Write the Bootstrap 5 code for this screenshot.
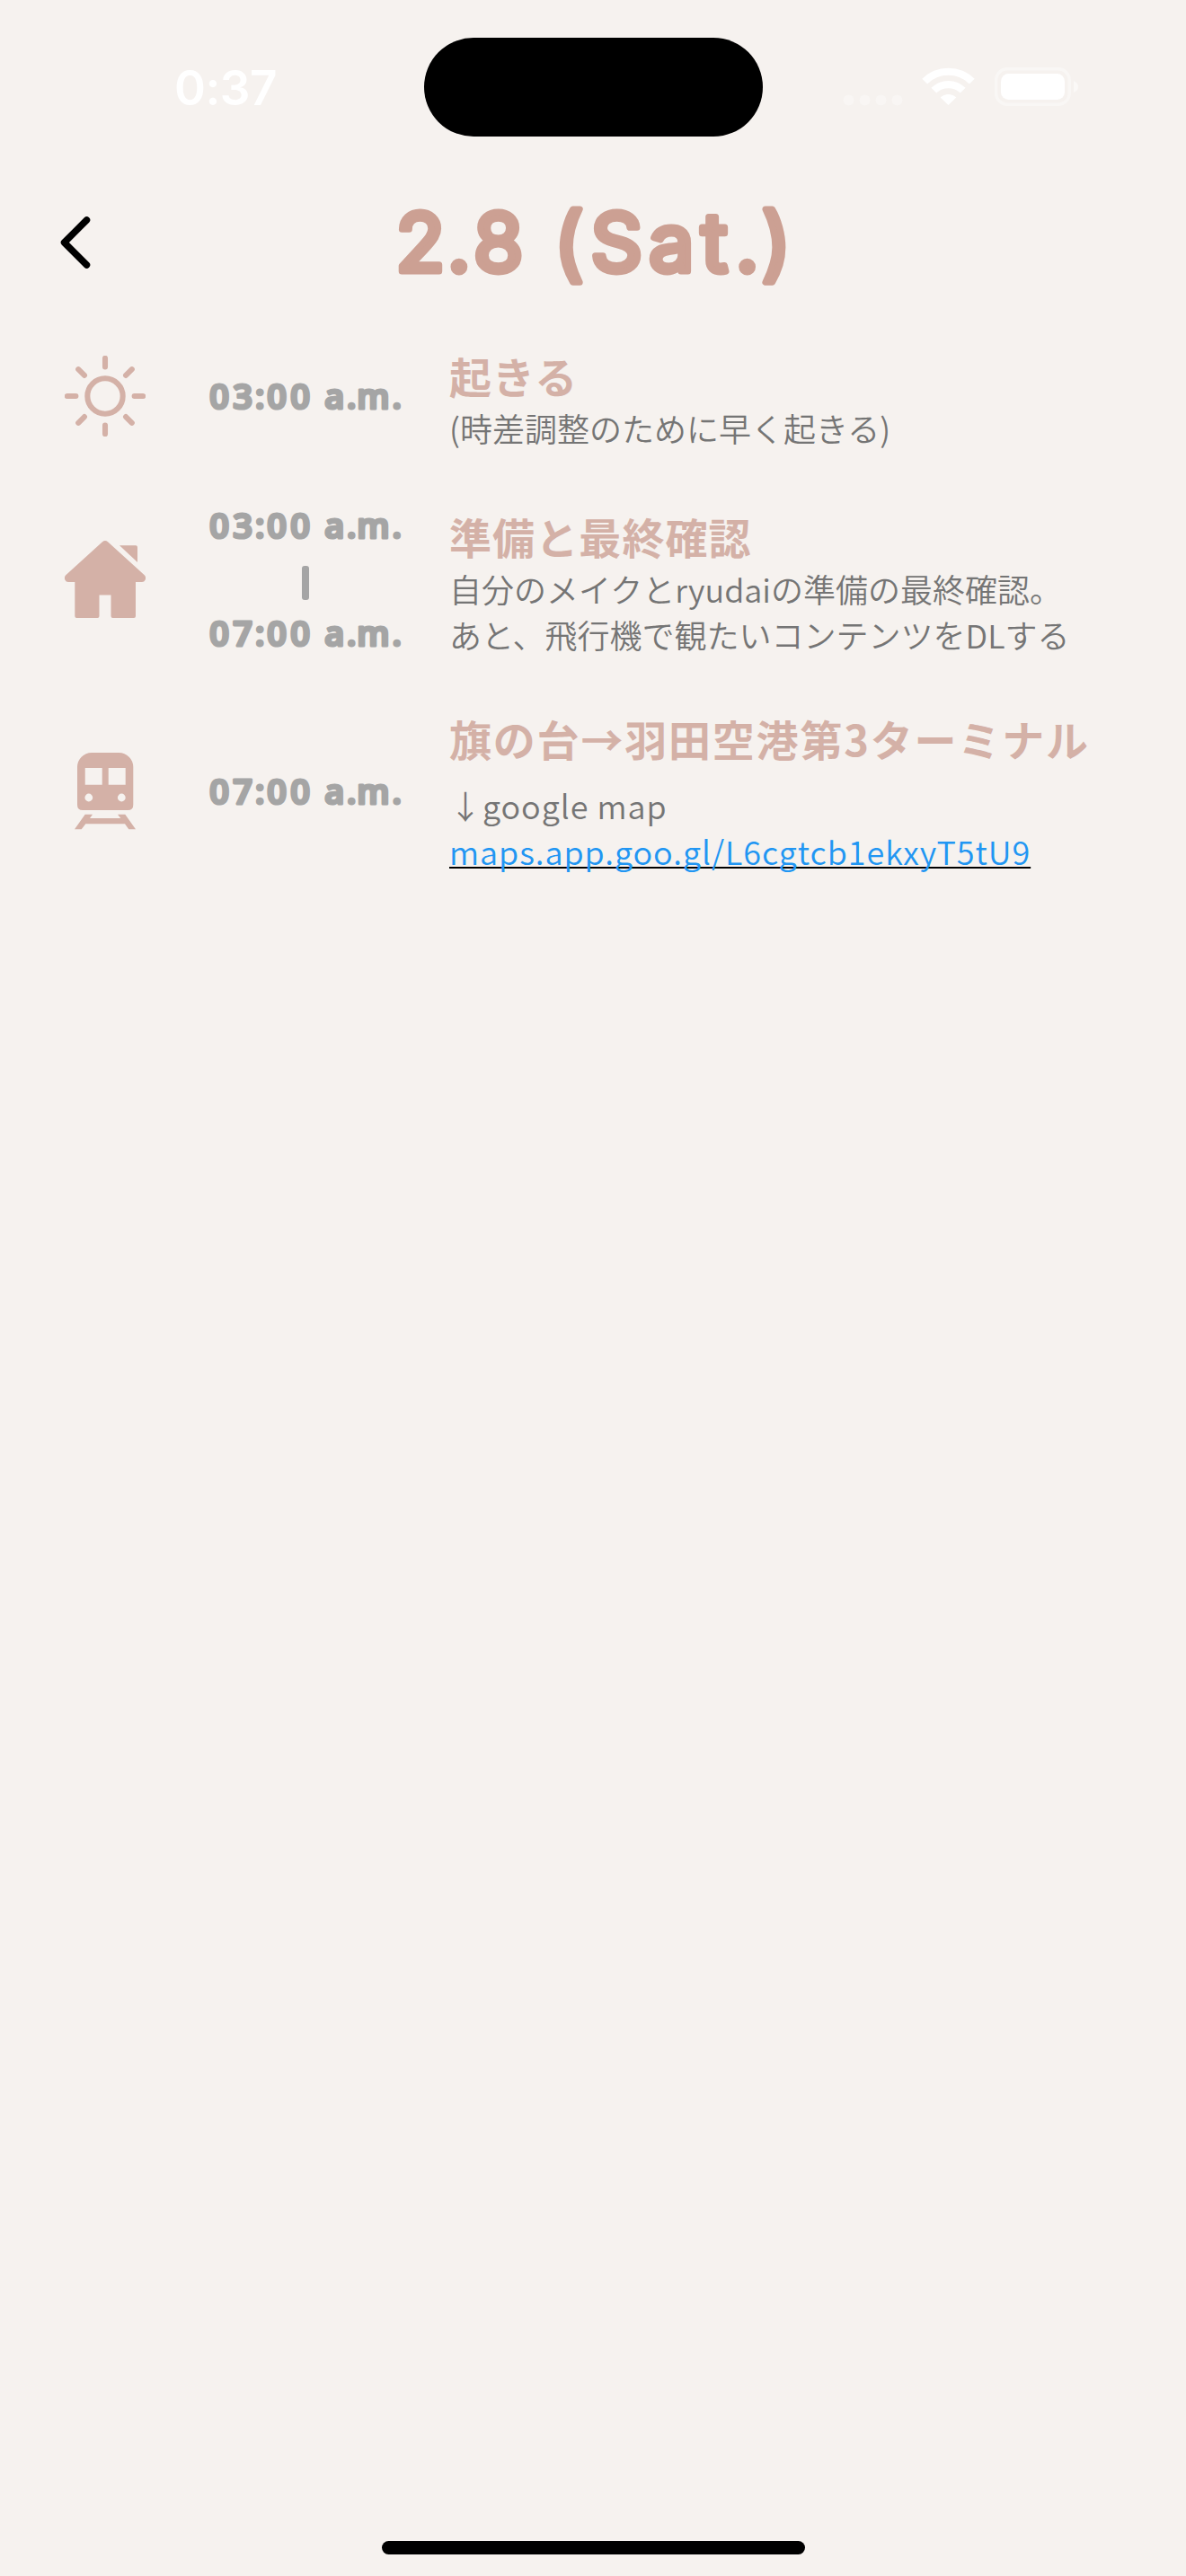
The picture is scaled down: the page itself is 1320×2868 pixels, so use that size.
<!DOCTYPE html>
<html lang="ja">
<head>
<meta charset="utf-8">
<meta name="viewport" content="width=device-width, initial-scale=1">
<title>2.8 (Sat.)</title>
<link rel="stylesheet" href="https://cdn.jsdelivr.net/npm/bootstrap@5.3.0/dist/css/bootstrap.min.css">
<style>
  body { background: #f6f2ef; font-family: "Noto Sans CJK JP", "Noto Sans", sans-serif; }
  .screen { height: 2868px; width: 1320px; overflow: hidden; }
  .statusbar { height: 210px; padding: 42px 119px 0 194px; }
  .island { width: 377px; height: 110px; border-radius: 55px; background: #000; }
  .clock { font: 600 53px/112px Inter, sans-serif; color: #fff; width: 278px; letter-spacing: -.5px; }
  .topbar { height: 165px; padding-left: 60px; }
  .page-title { margin-left: 320px; }
  .page-title, .plan-time svg { overflow: visible; }
  .heading-type { font-family: Inter, sans-serif; font-weight: 400; font-size: 89.5px; fill: #cca093; stroke: #cca093; stroke-width: 7px; stroke-linejoin: round; }
  .time-type { font-family: "Open Sans", "Noto Sans", sans-serif; font-weight: 600; font-size: 38px; fill: #a5a5a5; stroke: #a5a5a5; stroke-width: 3.2px; stroke-linejoin: round; }
  .plan { padding-left: 72px; }
  .plan-a { height: 132px; }
  .plan-b { height: 276px; }
  .plan-c { height: 196px; }
  .plan-icon { width: 90px; height: 90px; color: #d4b1a7; margin-right: 70px; }
  .plan-time { width: 216px; margin-right: 52px; }
  .plan-sep { width: 7.5px; height: 38px; border-radius: 3px; background: #a5a5a5; margin: 17px 0 9px; }
  .plan-text { padding-top: 5px; }
  .plan-name { font-size: 47px; line-height: 66px; font-weight: 700; color: #d4b1a7; letter-spacing: 1.1px; margin: 0; }
  .wide-name { letter-spacing: 1.8px; }
  .plan-note { font-size: 36px; line-height: 51px; font-weight: 350; color: #757575; margin: 0; }
  .wide-note { letter-spacing: .95px; }
  .map-link { color: #2196f3; text-decoration: underline #000 2px; text-decoration-skip-ink: none; text-underline-offset: 2px; }
  .home-bar { width: 471px; height: 15px; border-radius: 8px; background: #000; margin-bottom: 24px; }
</style>
<script src="https://cdn.jsdelivr.net/npm/bootstrap@5.3.0/dist/js/bootstrap.bundle.min.js"></script>
</head>
<body>
<div class="screen d-flex flex-column">
  <div class="statusbar d-flex align-items-start">
    <div class="clock">0:37</div>
    <div class="island"></div>
    <svg class="ms-auto" width="270" height="110" viewBox="929 42 270 110">
      <g fill="#fff" opacity=".35"><circle cx="942.5" cy="111.5" r="6"/><circle cx="960.5" cy="111.5" r="6"/><circle cx="978.5" cy="111.5" r="6"/><circle cx="996.5" cy="111.5" r="6"/></g>
      <g fill="none" stroke="#fff" stroke-width="8.2"><path d="M1027.2 90.6a37.3 37.3 0 0 1 52.6 0"/><path d="M1037.3 100.7a23 23 0 0 1 32.4 0"/></g>
      <path fill="#fff" d="M1053.5 117l-8.8-8.6a12.8 12.8 0 0 1 17.6 0z"/>
      <rect x="1106.6" y="76.8" width="81.6" height="39.4" rx="12.5" fill="none" stroke="#fff" stroke-width="3.5" opacity=".4"/>
      <rect x="1112" y="82" width="71" height="29" rx="8.5" fill="#fff"/>
      <path d="M1193 90q5 2 5 6.5t-5 6.5z" fill="#fff" opacity=".5"/>
    </svg>
  </div>

  <header class="topbar d-flex align-items-start">
    <svg width="50" height="120" viewBox="60 210 50 120" fill="none" stroke="#000" stroke-width="7.5" stroke-linecap="round" stroke-linejoin="round"><path d="M96.5 245L71.5 270L96.5 295"/></svg>
    <svg class="page-title" width="460" height="130" viewBox="430 210 460 130" role="heading" aria-level="1">
      <text class="heading-type" y="302" x="440.5 498 527 585 616.8 657.5 722.2 780.5 818.7 847.7">2.8 (Sat.)</text>
    </svg>
  </header>

  <main class="plan flex-grow-1">
    <section class="plan-a d-flex align-items-center">
      <svg class="plan-icon" viewBox="0 0 16 16" fill="none" stroke="currentColor" stroke-width="1.08" stroke-linecap="round"><circle cx="8" cy="8" r="3.5"/><path d="M8 .5v1.7M8 13.8v1.7M.5 8h1.7M13.8 8h1.7M2.7 2.7l1.2 1.2M12.1 12.1l1.2 1.2M13.3 2.7l-1.2 1.2M3.9 12.1l-1.2 1.2"/></svg>
      <div class="plan-time d-flex flex-column align-items-center">
        <svg width="216" height="56"><text class="time-type" y="41.8" x="1.3 27.3 52 65.3 91.3 115 129.2 154 165.2 204.5">03:00 a.m.</text></svg>
      </div>
      <div class="plan-text">
        <h2 class="plan-name">起きる</h2>
        <p class="plan-note">(時差調整のために早く起きる)</p>
      </div>
    </section>

    <section class="plan-b d-flex align-items-center">
      <svg class="plan-icon" viewBox="0 0 90 90" fill="currentColor"><path d="M42 3.2Q45 .8 48 3.2L89 40.5Q91 43 89.7 45.5Q88.5 48 86 48H79V86Q79 88 77 88H53.5Q51.5 88 51.5 86V62.5H38.5V86Q38.5 88 36.5 88H13.3Q11.3 88 11.3 86V48H4Q1.5 48 .3 45.5Q-1 43 1 40.5Z"/><path d="M61 7.3H79Q81 7.3 81 9.3V26Z"/></svg>
      <div class="plan-time d-flex flex-column align-items-center">
        <svg width="216" height="56"><text class="time-type" y="41.8" x="1.3 27.3 52 65.3 91.3 115 129.2 154 165.2 204.5">03:00 a.m.</text></svg>
        <div class="plan-sep"></div>
        <svg width="216" height="56"><text class="time-type" y="41.8" x="1.3 27.3 52 65.3 91.3 115 129.2 154 165.2 204.5">07:00 a.m.</text></svg>
      </div>
      <div class="plan-text">
        <h2 class="plan-name">準備と最終確認</h2>
        <p class="plan-note">自分のメイクとryudaiの準備の最終確認。<br>あと、飛行機で観たいコンテンツをDLする</p>
      </div>
    </section>

    <section class="plan-c d-flex align-items-center">
      <svg class="plan-icon" viewBox="0 0 90 90" fill="currentColor"><path fill-rule="evenodd" d="M30 2H60.3A16 16 0 0 1 76.3 18V60Q76.3 66 70.3 66H20Q14 66 14 60V18A16 16 0 0 1 30 2ZM22.7 19V37.7H41.7V19ZM48.7 19V37.7H67.7V19ZM22.4 52a4.4 4.4 0 1 0 8.8 0a4.4 4.4 0 1 0-8.8 0ZM58.9 52a4.4 4.4 0 1 0 8.8 0a4.4 4.4 0 1 0-8.8 0Z"/><path d="M22.7 70.7H31L28 75H62.3L59 70.7H67.3L79 87.3H71.3L67 81.2H23.3L18.7 87.3H11Z"/></svg>
      <div class="plan-time d-flex flex-column align-items-center">
        <svg width="216" height="56"><text class="time-type" y="41.8" x="1.3 27.3 52 65.3 91.3 115 129.2 154 165.2 204.5">07:00 a.m.</text></svg>
      </div>
      <div>
        <h2 class="plan-name wide-name mb-3">旗の台→羽田空港第3ターミナル</h2>
        <p class="plan-note wide-note">↓google map<br><a class="map-link" href="https://maps.app.goo.gl/L6cgtcb1ekxyT5tU9">maps.app.goo.gl/L6cgtcb1ekxyT5tU9</a></p>
      </div>
    </section>
  </main>

  <div class="home-bar align-self-center"></div>
</div>
</body>
</html>
